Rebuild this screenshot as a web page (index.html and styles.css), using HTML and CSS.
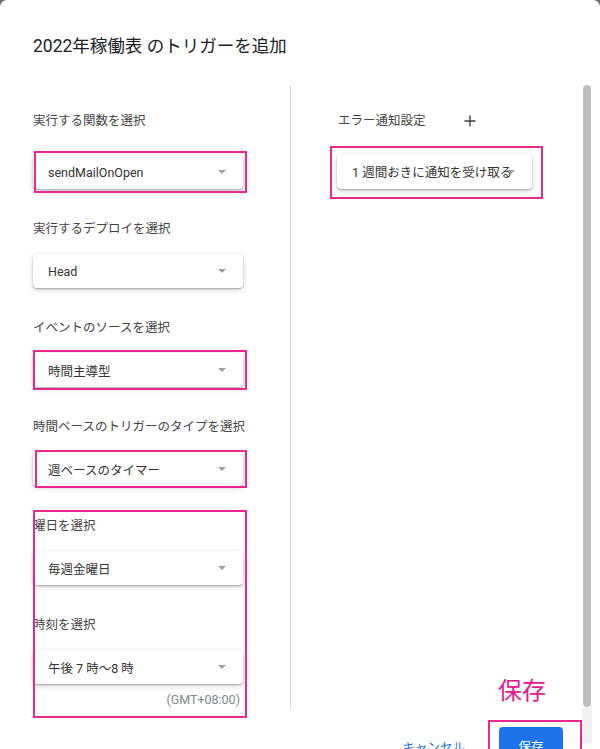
FILE: index.html
```html
<!DOCTYPE html>
<html lang="ja">
<head>
<meta charset="utf-8">
<title>トリガーを追加</title>
<link rel="stylesheet" href="styles.css">
</head>
<body>
<div class="dialog">
  <h1 class="title">2022年稼働表 のトリガーを追加</h1>
  <div class="content">
    <div class="col-left">
      <div class="field first">
        <div class="label">実行する関数を選択</div>
        <div class="select hl hl-a"><span class="val">sendMailOnOpen</span><span class="arrow"></span></div>
      </div>
      <div class="field">
        <div class="label">実行するデプロイを選択</div>
        <div class="select"><span class="val">Head</span><span class="arrow"></span></div>
      </div>
      <div class="field">
        <div class="label">イベントのソースを選択</div>
        <div class="select hl hl-b"><span class="val">時間主導型</span><span class="arrow"></span></div>
      </div>
      <div class="field">
        <div class="label">時間ベースのトリガーのタイプを選択</div>
        <div class="select hl hl-c"><span class="val">週ベースのタイマー</span><span class="arrow"></span></div>
      </div>
      <div class="group hl hl-group">
        <div class="field">
          <div class="label">曜日を選択</div>
          <div class="select"><span class="val">毎週金曜日</span><span class="arrow"></span></div>
        </div>
        <div class="field">
          <div class="label">時刻を選択</div>
          <div class="select"><span class="val">午後 7 時〜8 時</span><span class="arrow"></span></div>
        </div>
        <div class="tz">(GMT+08:00)</div>
      </div>
    </div>
    <div class="col-right">
      <div class="err-row">
        <span class="label">エラー通知設定</span>
        <svg class="plus" width="12" height="12" viewBox="0 0 12 12"><path d="M6 0.5v11M0.5 6h11" stroke="#3c4043" stroke-width="1.4" fill="none"/></svg>
      </div>
      <div class="select select-r hl hl-r"><span class="val">1 週間おきに通知を受け取る</span><span class="arrow"></span></div>
    </div>
  </div>
  <div class="footer">
    <span class="cancel">キャンセル</span>
    <span class="save hl hl-save">保存</span>
  </div>
  <div class="note">保存</div>
  <div class="scrollbar"><div class="thumb"></div><div class="track"></div></div>
</div>
</body>
</html>
```
FILE: styles.css
```css
html, body {
  margin: 0;
  padding: 0;
  background: #6b6b6b;
}
body {
  font-family: "Roboto", "Noto Sans CJK JP", sans-serif;
  color: #3c4043;
}
.dialog {
  position: relative;
  width: 600px;
  height: 749px;
  background: #fff;
  border-radius: 7px 7px 0 0;
  overflow: hidden;
  box-sizing: border-box;
  padding-top: 34px;
}
.title {
  margin: 0 0 27px 33px;
  font-size: 17.5px;
  line-height: 24px;
  font-weight: 400;
  color: #202124;
}
.content {
  display: flex;
  height: 625px;
}
.col-left {
  width: 291px;
  flex-shrink: 0;
  box-sizing: border-box;
  padding: 26px 0 0 33px;
  border-right: 1px solid #d6d6d6;
}
.col-right {
  padding: 26px 0 0 47px;
}
.field {
  width: 210px;
  margin-top: 30px;
}
.field.first {
  margin-top: 0;
}
.label {
  font-size: 12.5px;
  line-height: 20px;
  color: #444;
  white-space: nowrap;
}
.field .label {
  margin-bottom: 15px;
}
.field.first .label {
  margin-bottom: 24px;
}
.select {
  display: grid;
  grid-template-columns: 1fr;
  align-items: center;
  height: 34px;
  padding: 0 17px 0 15px;
  box-sizing: border-box;
  background: #fff;
  border-radius: 4px;
  box-shadow: 0 1px 2px rgba(0,0,0,0.28), 0 2px 6px rgba(0,0,0,0.16);
  font-size: 12.5px;
  color: #333;
}
.select > * {
  grid-row: 1;
  grid-column: 1;
}
.val {
  white-space: nowrap;
}
.arrow {
  justify-self: end;
  width: 0;
  height: 0;
  border-left: 4px solid transparent;
  border-right: 4px solid transparent;
  border-top: 4px solid #9aa0a6;
}
.group {
  width: 210px;
  margin-top: 30px;
}
.tz {
  margin-top: 8px;
  padding-right: 3px;
  text-align: right;
  font-size: 12.5px;
  line-height: 16px;
  color: #80868b;
}
.err-row {
  display: flex;
  align-items: center;
  gap: 38px;
  height: 20px;
}
.err-row .label {
  color: #444;
}
.select-r {
  width: 195px;
  height: 35px;
  margin: 23px 0 0 -1px;
}
.hl {
  position: relative;
}
.hl::after {
  content: "";
  position: absolute;
  border: 2px solid #e8288f;
  pointer-events: none;
}
.hl-a::after { top: -4px; bottom: -4px; left: 1px; right: -4px; }
.hl-b::after { top: -3px; bottom: -3px; left: 0; right: -4px; }
.hl-c::after { top: -2px; bottom: -2px; left: 2px; right: -4px; }
.hl-group::after { top: -6px; bottom: -10px; left: 0; right: -4px; }
.hl-r::after { top: -8px; bottom: -10px; left: -7px; right: -11px; }
.hl-save::after { top: -7px; bottom: -20px; left: -11px; right: -19px; }
.footer {
  display: flex;
  justify-content: flex-end;
  align-items: flex-start;
  gap: 34px;
  padding-right: 37px;
  margin-top: 17px;
}
.cancel {
  margin-top: 12px;
  font-size: 12.5px;
  line-height: 18px;
  color: #1a73e8;
}
.save {
  width: 64px;
  height: 36px;
  box-sizing: border-box;
  padding-top: 11px;
  text-align: center;
  background: #1a73e8;
  color: #fff;
  border-radius: 4px;
  font-size: 12.5px;
  line-height: 18px;
}
.note {
  position: absolute;
  left: 498px;
  top: 674px;
  font-size: 24px;
  line-height: 30px;
  color: #e6198a;
  font-family: "Noto Sans CJK JP", sans-serif;
}
.scrollbar {
  position: absolute;
  left: 582px;
  top: 85px;
  width: 10px;
  display: flex;
  flex-direction: column;
}
.thumb {
  height: 622px;
  margin: 0 1px;
  background: #bdbdbd;
  border-radius: 5px;
}
.track {
  height: 36px;
  background: #f1f1f1;
}
```
